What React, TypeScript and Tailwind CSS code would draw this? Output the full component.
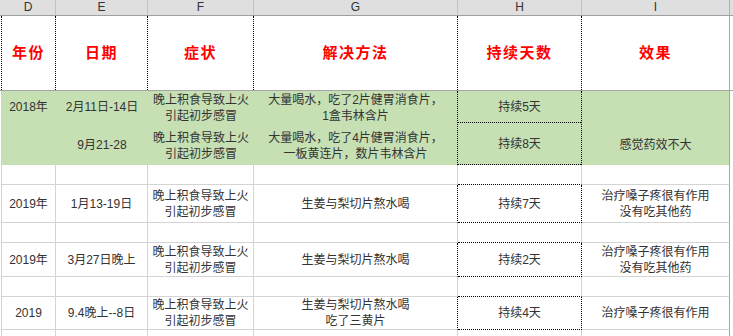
import React from "react";

const GREEN = "bg-[#c6e0b4]";

function C({ w, cls = "", children }: { w: string; cls?: string; children?: React.ReactNode }) {
  return (
    <div className={`${w} ${cls} shrink-0 flex flex-col items-center justify-center text-center`}>
      {children}
    </div>
  );
}

const N = "border-r border-b border-[#d4d4d4]";
const ND = "border-l border-r border-b border-[#d4d4d4]";
const NI = "border-r border-b border-r-[#a6a6a6] border-b-[#d4d4d4]";
const GDOT = "border-r border-b border-b-[#d4d4d4] border-r-black [border-right-style:dotted]";
const HBOX = "border-r border-b border-black border-dotted";
const HTOP = "border-r border-b border-r-[#d4d4d4] border-b-black [border-bottom-style:dotted]";

function EmptyRow({ hcls }: { hcls: string }) {
  return (
    <div className="flex pl-px h-[20px]">
      <C w="w-[55px]" cls={ND} />
      <C w="w-[92px]" cls={N} />
      <C w="w-[106px]" cls={N} />
      <C w="w-[204px]" cls={N} />
      <C w="w-[124px]" cls={hcls} />
      <C w="w-[148px]" cls={NI} />
    </div>
  );
}

function DataRow({
  h,
  d,
  e,
  f,
  g,
  hh,
  i,
}: {
  h: string;
  d: string;
  e: string;
  f: string[];
  g: string[];
  hh: string;
  i: string[];
}) {
  return (
    <div className={`flex pl-px ${h}`}>
      <C w="w-[55px]" cls={ND}>{d}</C>
      <C w="w-[92px]" cls={N}>{e}</C>
      <C w="w-[106px]" cls={N}>
        {f.map((t) => (
          <div key={t}>{t}</div>
        ))}
      </C>
      <C w="w-[204px]" cls={GDOT}>
        {g.map((t) => (
          <div key={t}>{t}</div>
        ))}
      </C>
      <C w="w-[124px]" cls={HBOX}>{hh}</C>
      <C w="w-[148px]" cls={NI}>
        {i.map((t) => (
          <div key={t}>{t}</div>
        ))}
      </C>
    </div>
  );
}

export default function App() {
  const F2 = ["晚上积食导致上火", "引起初步感冒"];
  return (
    <div className="w-[733px] h-[336px] overflow-hidden bg-white text-[#333333] text-[12px] leading-[16px] font-['Liberation_Sans','Noto_Sans_CJK_SC',sans-serif]">
      {/* column letters */}
      <div className="flex pl-px h-[16px] bg-[#dfdfdf] border-b border-[#9f9f9f] text-[#333] text-[12px] leading-[15px]">
        <C w="w-[55px]" cls="border-r border-[#c3c3c3]">D</C>
        <C w="w-[92px]" cls="border-r border-[#c3c3c3]">E</C>
        <C w="w-[106px]" cls="border-r border-[#c3c3c3]">F</C>
        <C w="w-[204px]" cls="border-r border-[#c3c3c3]">G</C>
        <C w="w-[124px]" cls="border-r border-[#c3c3c3]">H</C>
        <C w="w-[148px]" cls="border-r border-[#b0b0b0]">I</C>
      </div>

      {/* header row */}
      <div className="flex pl-px h-[75px] border-b border-[#a6a6a6] text-[#ff0000] font-bold text-[15px] tracking-[1.5px]">
        <C w="w-[55px]" cls="border-l border-r border-black border-dotted">年份</C>
        <C w="w-[92px]" cls="border-r border-black border-dotted">日期</C>
        <C w="w-[106px]" cls="border-r border-black border-dotted">症状</C>
        <C w="w-[204px]" cls="border-r border-black border-dotted">解决方法</C>
        <C w="w-[124px]" cls="border-r border-black border-dotted">持续天数</C>
        <C w="w-[148px]" cls="border-r border-[#a6a6a6]">效果</C>
      </div>

      {/* green 2018 block */}
      <div className="flex pl-px h-[74px]">
        <div className={`w-[55px] shrink-0 flex flex-col ${GREEN}`}>
          <div className="h-[32px] flex items-center justify-center">2018年</div>
          <div className="h-[42px]" />
        </div>
        <div className={`w-[92px] shrink-0 flex flex-col ${GREEN}`}>
          <div className="h-[32px] flex items-center justify-center">2月11日-14日</div>
          <div className="h-[42px] flex items-center justify-center pt-[2px]">9月21-28</div>
        </div>
        <div className={`w-[106px] shrink-0 flex flex-col text-center ${GREEN}`}>
          <div className="h-[32px] flex flex-col items-center justify-center pt-[1px]">
            <div>晚上积食导致上火</div>
            <div>引起初步感冒</div>
          </div>
          <div className="h-[42px] flex flex-col items-center justify-center pt-[3px]">
            <div>晚上积食导致上火</div>
            <div>引起初步感冒</div>
          </div>
        </div>
        <div className={`w-[204px] shrink-0 flex flex-col text-center border-r border-black [border-right-style:dotted] ${GREEN}`}>
          <div className="h-[32px] flex flex-col items-center justify-center pt-[1px]">
            <div>大量喝水，吃了2片健胃消食片，</div>
            <div>1盒韦林含片</div>
          </div>
          <div className="h-[42px] flex flex-col items-center justify-center pt-[3px]">
            <div>大量喝水，吃了4片健胃消食片，</div>
            <div>一板黄连片，数片韦林含片</div>
          </div>
        </div>
        <div className={`w-[124px] shrink-0 flex flex-col border-r border-black border-dotted ${GREEN}`}>
          <div className="h-[32px] flex items-center justify-center border-b border-black border-dotted">持续5天</div>
          <div className="h-[42px] flex items-center justify-center border-b border-black border-dotted pt-[1px]">持续8天</div>
        </div>
        <div className={`w-[148px] shrink-0 flex flex-col border-r border-[#a6a6a6] ${GREEN}`}>
          <div className="h-[32px]" />
          <div className="h-[42px] flex items-center justify-center pt-[2px]">感觉药效不大</div>
        </div>
      </div>

      <EmptyRow hcls={HTOP} />
      <DataRow
        h="h-[38px]"
        d="2019年"
        e="1月13-19日"
        f={F2}
        g={["生姜与梨切片熬水喝"]}
        hh="持续7天"
        i={["治疗嗓子疼很有作用", "没有吃其他药"]}
      />
      <EmptyRow hcls={HTOP} />
      <DataRow
        h="h-[34px]"
        d="2019年"
        e="3月27日晚上"
        f={F2}
        g={["生姜与梨切片熬水喝"]}
        hh="持续2天"
        i={["治疗嗓子疼很有作用", "没有吃其他药"]}
      />
      <EmptyRow hcls={HTOP} />
      <DataRow
        h="h-[33px]"
        d="2019"
        e="9.4晚上--8日"
        f={F2}
        g={["生姜与梨切片熬水喝", "吃了三黄片"]}
        hh="持续4天"
        i={["治疗嗓子疼很有作用"]}
      />
      <EmptyRow hcls={N} />
    </div>
  );
}
